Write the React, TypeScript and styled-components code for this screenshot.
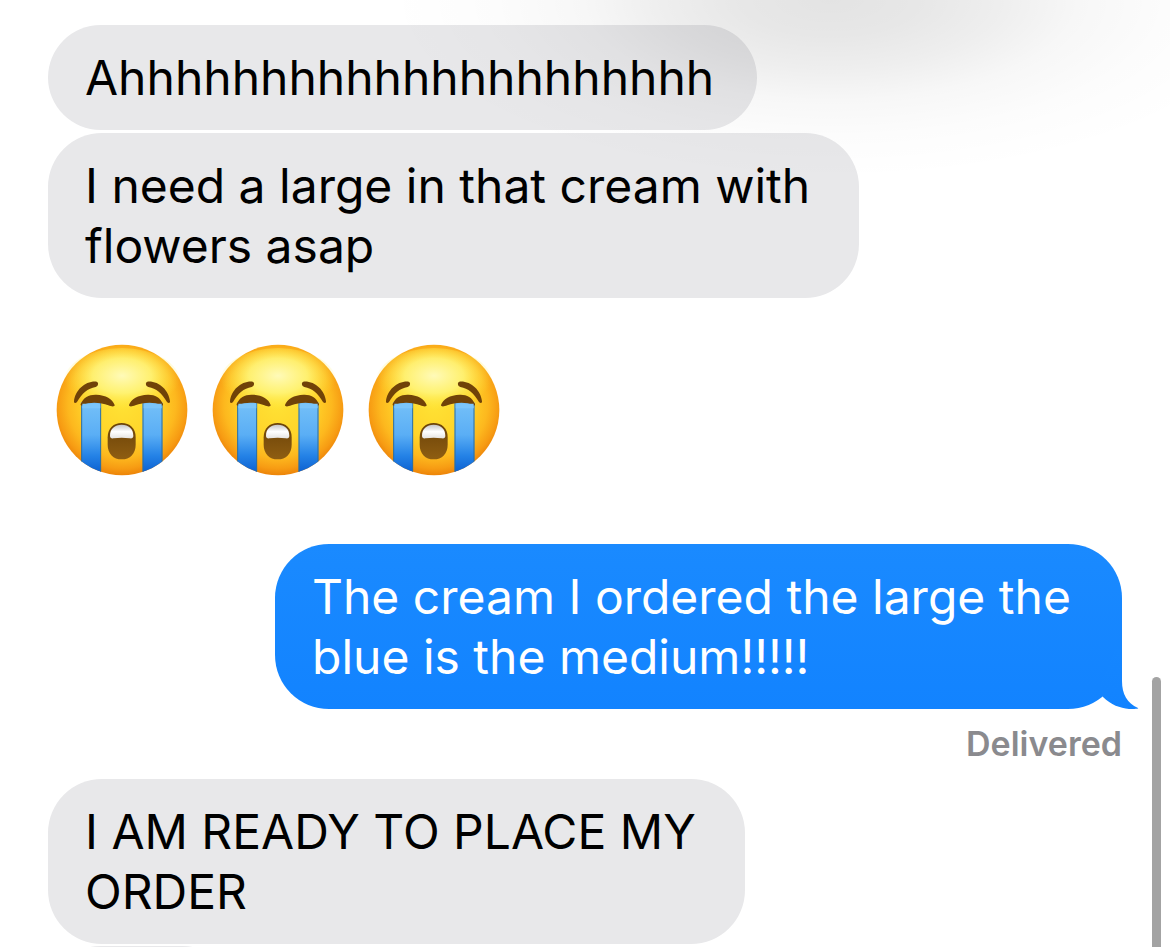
import React from "react";
import styled, { createGlobalStyle } from "styled-components";

const GlobalStyle = createGlobalStyle`
  * { box-sizing: border-box; }
  body {
    margin: 0;
    background: #ffffff;
    font-family: Inter, "Liberation Sans", sans-serif;
  }
`;

const Screen = styled.div`
  position: relative;
  height: 100vh;
  overflow: hidden;
  background: #ffffff;
`;

const Thread = styled.main`
  display: flex;
  flex-direction: column;
  padding: 25px 48px 0;
`;

const TopShade = styled.div`
  position: absolute;
  inset: 0 0 auto;
  height: 180px;
  pointer-events: none;
  background: radial-gradient(
    ellipse 38% 100% at 71% 0,
    rgba(0, 0, 0, 0.11) 0%,
    rgba(0, 0, 0, 0.095) 20%,
    rgba(0, 0, 0, 0.065) 38%,
    rgba(0, 0, 0, 0.032) 56%,
    rgba(0, 0, 0, 0.01) 76%,
    rgba(0, 0, 0, 0) 100%
  );
`;

const Bubble = styled.p<{ $sent?: boolean; $width: number; $gap?: number }>`
  position: relative;
  align-self: ${(p) => (p.$sent ? "flex-end" : "flex-start")};
  width: ${(p) => p.$width}px;
  max-width: 100%;
  min-height: 105px;
  margin: ${(p) => p.$gap ?? 0}px 0 0;
  padding: 23px 36px 22px 37px;
  border-radius: 54px;
  background: ${(p) => (p.$sent ? "linear-gradient(#1a8aff, #1283ff)" : "#e8e8ea")};
  color: ${(p) => (p.$sent ? "#ffffff" : "#000000")};
  font-size: 48px;
  line-height: 60px;
`;

const Tail = styled.svg`
  position: absolute;
  right: -17px;
  bottom: 0;
  width: 60px;
  height: 60px;
`;

const EmojiRow = styled.div`
  display: flex;
  gap: 24px;
  margin: 46px 0 0 8px;
`;

const Emoji = styled.svg`
  width: 132px;
  height: 132px;
`;

const Receipt = styled.span`
  align-self: flex-end;
  margin-top: 15px;
  color: #8a8a8e;
  font-size: 34px;
  font-weight: 600;
  line-height: 40px;
`;

const ScrollThumb = styled.div`
  position: absolute;
  top: 677px;
  right: 9px;
  bottom: -9px;
  width: 9px;
  border-radius: 5px;
  background: #a3a3a3;
`;

function SobbingFace({ id }: { id: string }) {
  const u = (name: string) => `url(#${id}-${name})`;
  return (
    <Emoji viewBox="49 42 396 396" role="img" aria-label="Loudly crying face">
      <defs>
        <radialGradient id={`${id}-face`} cx="247" cy="222" r="215" gradientUnits="userSpaceOnUse">
          <stop offset="0" stopColor="#ffe234" />
          <stop offset=".5" stopColor="#ffd42a" />
          <stop offset=".75" stopColor="#fdb81e" />
          <stop offset=".9" stopColor="#f79c13" />
          <stop offset="1" stopColor="#ec8308" />
        </radialGradient>
        <radialGradient id={`${id}-shine`} cx=".5" cy=".4" r=".5">
          <stop offset="0" stopColor="#fffcc0" stopOpacity=".95" />
          <stop offset=".5" stopColor="#fff67c" stopOpacity=".85" />
          <stop offset="1" stopColor="#ffe93c" stopOpacity="0" />
        </radialGradient>
        <linearGradient id={`${id}-tear`} x1="0" y1="220" x2="0" y2="430" gradientUnits="userSpaceOnUse">
          <stop offset="0" stopColor="#74c0f8" />
          <stop offset=".45" stopColor="#5aaef5" />
          <stop offset=".75" stopColor="#2482e6" />
          <stop offset="1" stopColor="#0a5fd0" />
        </linearGradient>
        <linearGradient id={`${id}-teeth`} x1="0" y1="284" x2="0" y2="326" gradientUnits="userSpaceOnUse">
          <stop offset="0" stopColor="#c4c4c8" />
          <stop offset=".5" stopColor="#ffffff" />
          <stop offset="1" stopColor="#e4e2e0" />
        </linearGradient>
        <linearGradient id={`${id}-mouth`} x1="0" y1="280" x2="0" y2="388" gradientUnits="userSpaceOnUse">
          <stop offset="0" stopColor="#6b4208" />
          <stop offset="1" stopColor="#8f5e12" />
        </linearGradient>
        <clipPath id={`${id}-clip`}>
          <circle cx="247" cy="240" r="196" />
        </clipPath>
      </defs>
      <circle cx="247" cy="240" r="196" fill={u("face")} />
      <ellipse cx="247" cy="158" rx="176" ry="104" fill={u("shine")} />
      <g clipPath={u("clip")}>
        <path d="M125 216h59v230h-59zM309 216h59v230h-59z" fill={u("tear")} />
        <path
          d="M126 220v220M183 220v220M310 220v220M367 220v220"
          fill="none"
          stroke="#2f6f9c"
          strokeWidth="3"
        />
      </g>
      <g fill="#704208">
        <path d="M103 214C106 181 137 152 171 155C178 157 176 168 168 171C144 175 127 190 112 216C108 221 102 220 103 214Z" />
        <path d="M391 214C388 181 357 152 323 155C316 157 318 168 326 171C350 175 367 190 382 216C386 221 392 220 391 214Z" />
        <path d="M123 222C131 202 149 193 170 194C198 195 219 207 225 225C225 231 216 230 206 226C184 217 150 214 131 225C126 228 122 227 123 222Z" />
        <path d="M370 222C362 202 344 193 324 194C295 195 274 207 268 225C268 231 277 230 287 226C309 217 343 214 362 225C367 228 371 227 370 222Z" />
      </g>
      <path d="M128 221h54v14h-54zM312 221h54v14h-54z" fill="#7cc5fa" />
      <path
        d="M204 322C204 294 222 279 246 279C270 279 288 294 288 322V344C288 371 271 388 246 388C221 388 204 371 204 344Z"
        fill={u("mouth")}
      />
      <path
        d="M211 317C211 296 225 284 246 284C267 284 281 296 281 317C281 324 277 326 270 325C254 323 238 323 222 325C215 326 211 324 211 317Z"
        fill={u("teeth")}
      />
    </Emoji>
  );
}

export default function App() {
  return (
    <Screen>
      <GlobalStyle />
      <Thread>
        <Bubble $width={709}>Ahhhhhhhhhhhhhhhhhhhhh</Bubble>
        <Bubble $width={811} $gap={3}>I need a large in that cream with flowers asap</Bubble>
        <EmojiRow>
          <SobbingFace id="a" />
          <SobbingFace id="b" />
          <SobbingFace id="c" />
        </EmojiRow>
        <Bubble $sent $width={847} $gap={68}>
          The cream I ordered the large the blue is the medium!!!!!
          <Tail viewBox="0 0 60 60" aria-hidden="true">
            <defs>
              <linearGradient id="tail" x1="0" y1="0" x2="0" y2="1">
                <stop offset="0" stopColor="#1586ff" />
                <stop offset="1" stopColor="#1283ff" />
              </linearGradient>
            </defs>
            <path
              d="M43 0V32C43 45 48 54 59 59C61 60 52 60 50 60C41 59 32 56 24 48L20 40L36 0Z"
              fill="url(#tail)"
            />
          </Tail>
        </Bubble>
        <Receipt>Delivered</Receipt>
        <Bubble $width={697} $gap={15}>I AM READY TO PLACE MY ORDER</Bubble>
        <Bubble $width={187} $gap={2} aria-hidden="true" />
      </Thread>
      <TopShade />
      <ScrollThumb />
    </Screen>
  );
}
